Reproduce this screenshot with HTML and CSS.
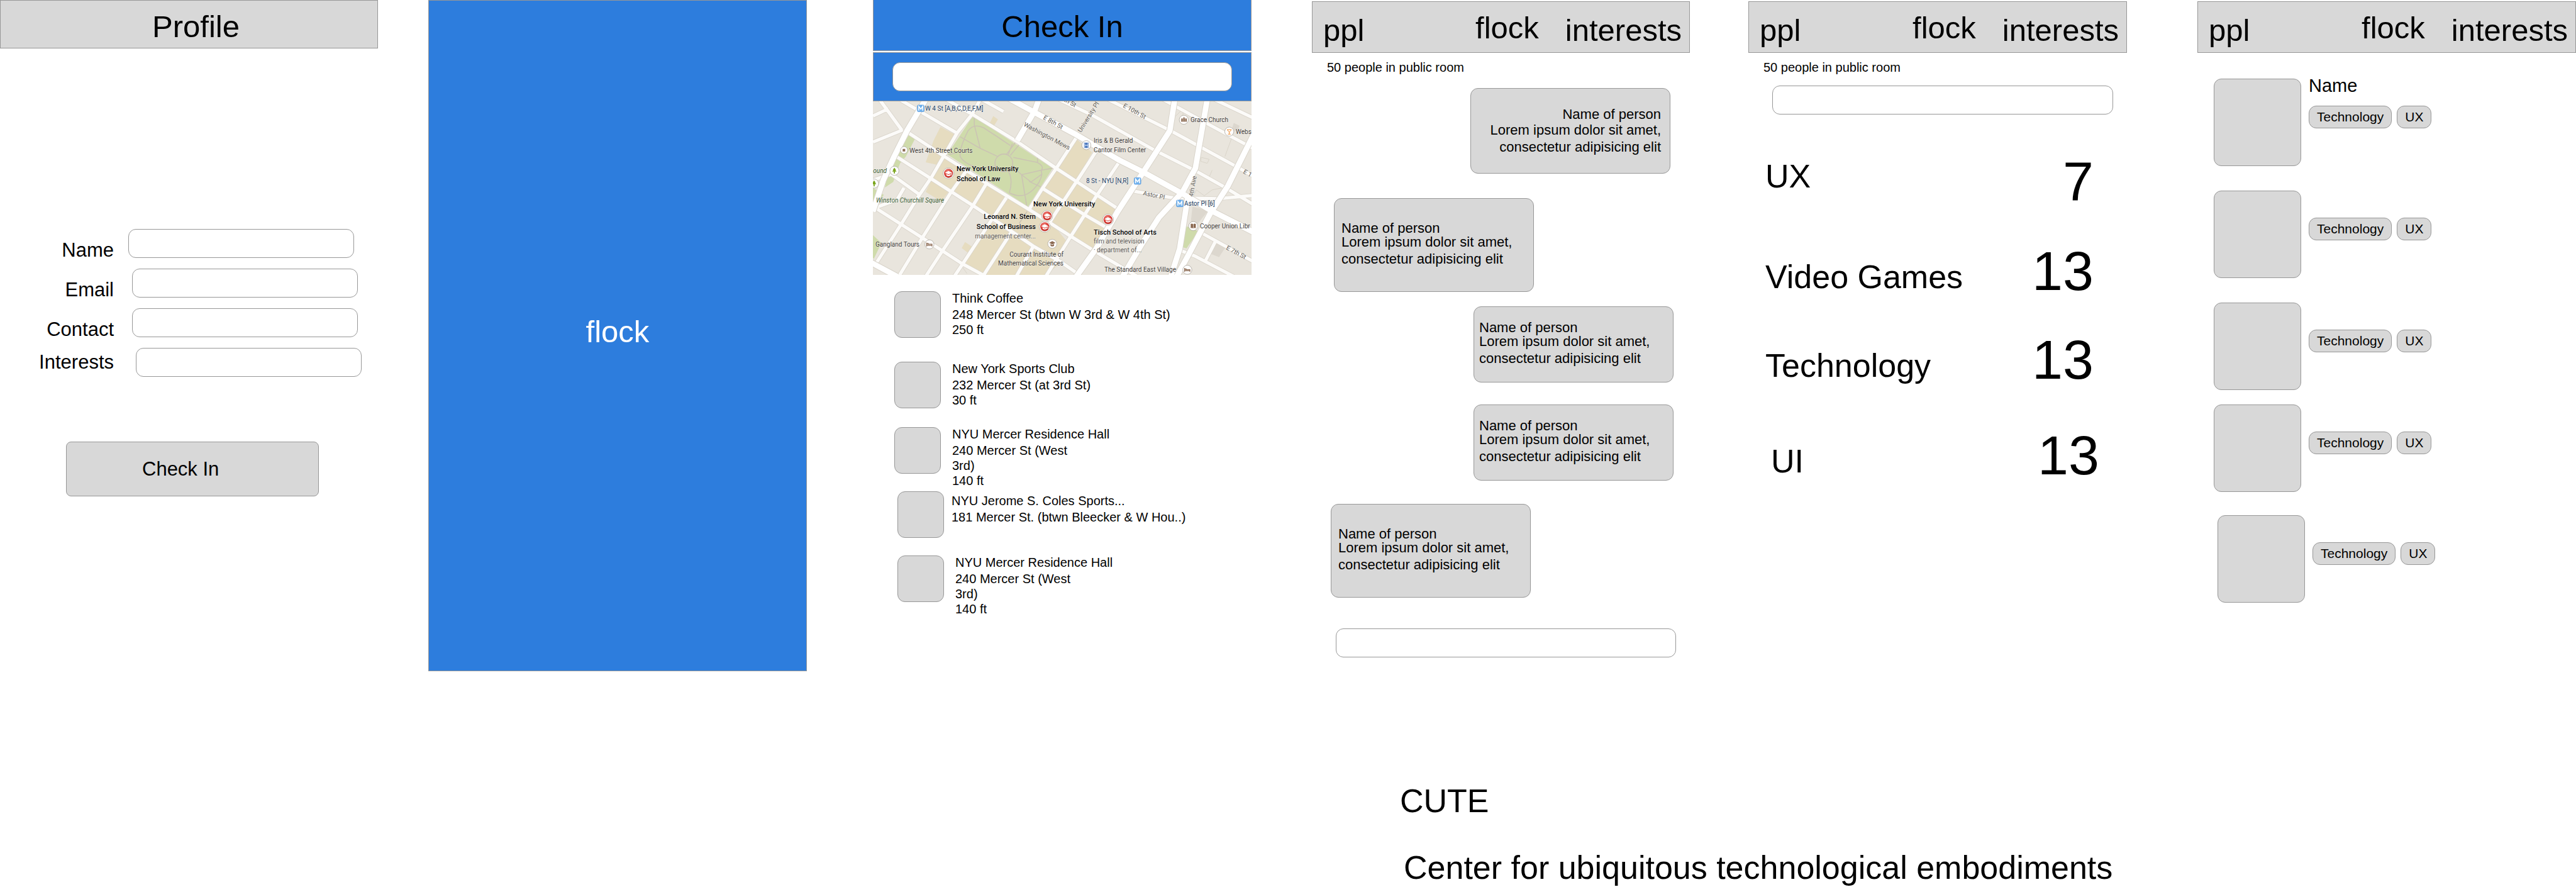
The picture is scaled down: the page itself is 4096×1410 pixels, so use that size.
FILE: index.html
```html
<!DOCTYPE html>
<html lang="en">
<head>
<meta charset="utf-8">
<meta name="viewport" content="width=device-width, initial-scale=1">
<title>flock wireframes</title>
<link rel="stylesheet" href="styles.css">
</head>
<body>
<main class="board">

  <section class="screen profile">
    <header class="bar"><h1 class="title">Profile</h1></header>
    <form class="profile-form">
      <div class="field"><label class="low" for="name">Name</label><input class="box" id="name" type="text"></div>
      <div class="field step-1"><label class="low" for="email">Email</label><input class="box" id="email" type="text"></div>
      <div class="field step-1"><label class="low" for="contact">Contact</label><input class="box" id="contact" type="text"></div>
      <div class="field step-2"><label for="interests">Interests</label><input class="box" id="interests" type="text"></div>
      <button class="submit" type="button">Check In</button>
    </form>
  </section>

  <section class="screen splash"><p class="title">flock</p></section>

  <section class="screen checkin">
    <header class="bar blue"><h2 class="title">Check In</h2></header>
    <div class="search"><input class="box" type="text" aria-label="Search places"></div>
    <svg class="map" viewBox="0 0 602 276" role="img" aria-label="Map around New York University">
      <defs>
        <radialGradient id="redfill" cx=".4" cy=".3" r=".8"><stop offset="0" stop-color="#f08078"/><stop offset=".6" stop-color="#d63c34"/><stop offset="1" stop-color="#b02a24"/></radialGradient>
        <g id="pin"><circle r="23" fill="#fff" stroke="#aaa59c" stroke-width="2.5"/></g>
        <g id="nyu"><circle r="28" fill="#fff" stroke="#bbb5ac" stroke-width="3"/><circle r="23" fill="url(#redfill)"/><path d="M-18-3 0-12 18-3 0 5Z M-11 3V10Q0 18 11 10V3L0 9Z" fill="#fff"/><path d="M16-3V11" stroke="#fff" stroke-width="3"/></g>
        <g id="tree"><use href="#pin"/><path d="M0-16 8-5H5L11 4H3V14H-3V4H-11L-5-5H-8Z" fill="#7aa51c"/></g>
        <g id="bed"><use href="#pin"/><path d="M-14-9V10M-14 5H13M13 10V-1H-8" fill="none" stroke="#8c6a52" stroke-width="4"/><circle cx="-8" cy="-3" r="4" fill="#8c6a52"/></g>
        <g id="metro"><rect x="-17" y="-17" width="34" height="34" rx="5" fill="#6fb1ee" stroke="#4a90d9" stroke-width="2"/><path d="M-10 11V-10L0 4 10-10V11" fill="none" stroke="#fff" stroke-width="5"/></g>
      </defs>
      <svg width="602" height="276" viewBox="57 30 1923 882" preserveAspectRatio="none">
        <rect x="57" y="30" width="1923" height="882" fill="#e9e5dd"/>
        <g fill="#e6dcc0">
          <path d="M400 160 475 200 410 305 380 352 325 340 365 230Z"/>
          <path d="M668 105 692 122 672 155 650 142Z"/>
          <path d="M415 315 850 580 1000 690 1040 740 990 840 760 700 565 560 355 425Z"/>
          <path d="M355 430 440 490 405 540 325 490Z"/>
          <path d="M525 745 560 768 540 800 508 775Z"/>
          <path d="M655 640 960 820 1010 850 940 912H600L510 860Z"/>
          <path d="M1095 225 1170 290 1090 430 1300 575 1180 790 1060 715 850 580 990 365Z"/>
        </g>
        <g fill="#dcd7ce"><path d="M1680 565 1760 585 1700 660 1672 640Z M1790 745 1845 775 1815 822 1772 805Z M1890 140 1920 155 1905 185 1880 170Z"/></g>
        <g fill="#cfdbab">
          <path d="M565 105 970 370 845 565 435 300Z"/>
          <path d="M240 200 270 222 225 310 195 345 160 440 118 468 130 400 175 310Z"/>
          <path d="M57 470 112 505 75 565 57 560Z"/>
          <path d="M1650 665 1710 690 1650 777 1625 770Z"/>
          <path d="M57 710 100 750 62 830 57 825Z"/>
        </g>
        <g fill="none" stroke="#cbc3b4" stroke-width="5">
          <circle cx="722" cy="343" r="45"/>
          <path d="M572 105V150L602 270M500 210 600 268 690 310M500 310Q495 270 540 180 570 140 620 165 690 210 755 255M500 310Q520 350 600 370L680 360M735 300 780 240M755 305 800 250M745 300 765 245M770 315Q840 330 890 340 930 360 912 380L812 403 765 360M970 370 912 380 915 400 860 440 812 403 838 560M893 315V340M745 385Q770 430 750 495M750 495Q820 530 870 480 910 440 915 400M850 437 910 465M440 302 480 292M840 590 800 650"/>
          <path stroke="#d9d3c8" stroke-width="3" d="M1595 105 1635 65 1630 110M1725 315 1765 325 1755 345 1722 335ZM1680 520 1700 480 1740 510 1780 480 1830 470M1765 415 1780 380M1845 310 1900 160M510 870 535 905"/>
        </g>
        <g id="roads" fill="none" stroke-linejoin="round">
          <path stroke="#d8d3c9" stroke-width="22" d="M200 25 485 192M420 15 560 95 790 235 990 372 1090 437 1300 575M230 185 420 310 640 450 850 580 960 650 1060 715 1180 790 1400 920M175 310 355 425 565 560 760 690 870 765 1010 845 1110 915M57 430 150 400 295 505M75 575 200 655 310 725 410 790 510 855 630 920M1000 20 1170 100 1490 280 1690 380 1850 470 1990 555M1250 20 1570 180 1900 360 1990 410M1530 20 1730 130 1990 270M1790 20 1990 115M1385 487 1580 520 1810 525 1990 508M57 105 135 68M57 237 210 175M90 20 130 75 205 178M600 15 720 82M915 470 1130 605 1245 672M1600 780 1690 815 1890 920M1710 690 1990 845M1795 745 1745 842M600 25 560 97 485 190 355 415 290 510 200 655 75 850M1090 215 990 368 920 470 850 580M530 385 455 490 310 720 188 920M635 445 565 560 410 790 325 920M735 520 655 640 510 860 470 920M760 695 615 920M870 770 785 920M1190 285 1090 440 990 590 955 645M1310 335 1190 515 1130 610 1050 735 935 920M215 470 180 530 70 570"/>
          <path stroke="#fcfbf9" stroke-width="17" d="M200 25 485 192M420 15 560 95 790 235 990 372 1090 437 1300 575M230 185 420 310 640 450 850 580 960 650 1060 715 1180 790 1400 920M175 310 355 425 565 560 760 690 870 765 1010 845 1110 915M57 430 150 400 295 505M75 575 200 655 310 725 410 790 510 855 630 920M1000 20 1170 100 1490 280 1690 380 1850 470 1990 555M1250 20 1570 180 1900 360 1990 410M1530 20 1730 130 1990 270M1790 20 1990 115M1385 487 1580 520 1810 525 1990 508M57 105 135 68M57 237 210 175M90 20 130 75 205 178M600 15 720 82M915 470 1130 605 1245 672M1600 780 1690 815 1890 920M1710 690 1990 845M1795 745 1745 842M600 25 560 97 485 190 355 415 290 510 200 655 75 850M1090 215 990 368 920 470 850 580M530 385 455 490 310 720 188 920M635 445 565 560 410 790 325 920M735 520 655 640 510 860 470 920M760 695 615 920M870 770 785 920M1190 285 1090 440 990 590 955 645M1310 335 1190 515 1130 610 1050 735 935 920M215 470 180 530 70 570"/>
          <path stroke="#d8d3c9" stroke-width="34" d="M325 20 230 180 165 310 110 430 57 590M900 20 878 80 790 230M720 0 870 82 1090 200 1310 330 1430 390 1630 500 1780 588 1990 695M1590 20 1565 180 1430 390 1300 590 1190 780 1090 920M1755 20 1695 370 1630 490 1510 620 1420 760 1325 920M1655 525 1615 780 1570 920M1990 200 1860 460 1770 600 1660 810 1600 920M40 845 180 920"/>
          <path stroke="#fff" stroke-width="28" d="M325 20 230 180 165 310 110 430 57 590M870 82 1090 200 1310 330 1430 390 1630 500M1590 20 1565 180 1430 390 1300 590 1190 780 1090 920M1755 20 1695 370 1630 490 1510 620 1420 760 1325 920M1655 525 1615 780 1570 920M1990 200 1860 460 1770 600 1660 810 1600 920M40 845 180 920M900 20 878 80 790 230M720 0 870 82M1630 500 1780 588 1990 695"/>
        </g>
        <use href="#metro" x="300" y="66"/><use href="#metro" x="1401" y="435"/><use href="#metro" x="1616" y="549"/>
        <use href="#tree" x="166" y="383"/><use href="#tree" x="63" y="448"/>
        <use href="#bed" x="344" y="757"/><use href="#bed" x="1654" y="886"/>
        <circle cx="215" cy="278" r="18" fill="#fff" stroke="#aaa59c" stroke-width="2.5"/><path d="M208 272h13v13h-13z" fill="#8c6a52"/>
        <use href="#pin" x="1636" y="124"/><path d="M1623 134v-14l4-5 4 5v14zM1633 134v-18l4-7 4 7v18zM1643 134v-14l4-5 4 5v14z" fill="#8c6a52"/>
        <use href="#pin" x="1867" y="184"/><path d="M1856 174h22l-11 13zM1867 186v10M1860 197h14" fill="none" stroke="#ee8a2c" stroke-width="3"/>
        <use href="#pin" x="1141" y="253"/><path d="M1131 240v27M1151 240v27" fill="none" stroke="#4b79c0" stroke-width="4" stroke-dasharray="4 2"/><path d="M1134 240h14v12h-14zM1134 255h14v12h-14z" fill="#4b79c0"/>
        <use href="#pin" x="1684" y="664"/><path d="M1671 653q7-4 12 1v22q-5-5-12-1zM1697 653q-7-4-12 1v22q5-5 12-1z" fill="#8c6a52"/>
        <use href="#pin" x="968" y="754"/><path d="M952 749l16-9 16 9-16 8zM959 755v9q9 7 18 0v-9l-9 5z" fill="#8c6a52"/>
        <use href="#nyu" x="441" y="396"/><use href="#nyu" x="942" y="612"/><use href="#nyu" x="930" y="667"/><use href="#nyu" x="1251" y="631"/>
      </svg>
      <g class="street">
        <text transform="translate(270 28) rotate(29)">E 8th St</text>
        <text transform="translate(239 39) rotate(28)">Washington Mews</text>
        <text transform="translate(331 50) rotate(-58)">University Pl</text>
        <text transform="translate(291 -7) rotate(29)">E 9th St</text>
        <text transform="translate(397 9) rotate(29)">E 10th St</text>
        <text transform="translate(429 149) rotate(12)">Astor Pl</text>
        <text transform="translate(509 152) rotate(-80)">4th Ave</text>
        <text transform="translate(588 114) rotate(29)">E 1</text>
        <text transform="translate(561 235) rotate(28)">E 7th St</text>
      </g>
      <g class="metro-name">
        <text x="83" y="15">W 4 St [A,B,C,D,E,F,M]</text>
        <text x="339" y="130">8 St - NYU [N,R]</text>
        <text x="495" y="166">Astor Pl [6]</text>
      </g>
      <g class="place">
        <text x="58" y="82">West 4th Street Courts</text>
        <text x="505" y="33">Grace Church</text>
        <text x="577" y="52">Webs</text>
        <text x="351" y="66">Iris &amp; B Gerald</text>
        <text x="351" y="81">Cantor Film Center</text>
        <text x="520" y="202">Cooper Union Libr</text>
        <text x="303" y="247" text-anchor="end">Courant Institute of</text>
        <text x="303" y="261" text-anchor="end">Mathematical Sciences</text>
        <text x="4" y="231">Gangland Tours</text>
        <text x="368" y="271">The Standard East Village</text>
      </g>
      <g class="note">
        <text x="259" y="218" text-anchor="end">management center...</text>
        <text x="351" y="226">film and television</text>
        <text x="351" y="240">· department of...</text>
      </g>
      <g class="green">
        <text x="22" y="114" text-anchor="end">ound</text>
        <text x="5" y="161">Winston Churchill Square</text>
      </g>
      <g class="school">
        <text x="133" y="111">New York University</text>
        <text x="133" y="127">School of Law</text>
        <text x="255" y="167">New York University</text>
        <text x="259" y="187" text-anchor="end">Leonard N. Stern</text>
        <text x="259" y="203" text-anchor="end">School of Business</text>
        <text x="351" y="212">Tisch School of Arts</text>
      </g>
    </svg>
    <ul class="places">
      <li><span class="thumb"></span><div class="lines"><h3>Think Coffee</h3><p>248 Mercer St (btwn W 3rd &amp; W 4th St)</p><p>250 ft</p></div></li>
      <li><span class="thumb"></span><div class="lines"><h3>New York Sports Club</h3><p>232 Mercer St (at 3rd St)</p><p>30 ft</p></div></li>
      <li><span class="thumb"></span><div class="lines"><h3>NYU Mercer Residence Hall</h3><p>240 Mercer St (West<br>3rd)</p><p>140 ft</p></div></li>
      <li class="shift snug"><span class="thumb"></span><div class="lines"><h3>NYU Jerome S. Coles Sports...</h3><p>181 Mercer St. (btwn Bleecker &amp; W Hou..)</p></div></li>
      <li class="shift"><span class="thumb"></span><div class="lines"><h3>NYU Mercer Residence Hall</h3><p>240 Mercer St (West<br>3rd)</p><p>140 ft</p></div></li>
    </ul>
  </section>

  <section class="screen chat">
    <nav class="bar tabs"><a href="#ppl">ppl</a><a class="home" href="#flock">flock</a><a href="#interests">interests</a></nav>
    <p class="status">50 people in public room</p>
    <div class="log">
      <article class="bubble mine inset reply"><h3>Name of person</h3><p>Lorem ipsum dolor sit amet,<br>consectetur adipisicing elit</p></article>
      <article class="bubble tall inset"><h3>Name of person</h3><p>Lorem ipsum dolor sit amet,<br>consectetur adipisicing elit</p></article>
      <article class="bubble mine"><h3>Name of person</h3><p>Lorem ipsum dolor sit amet,<br>consectetur adipisicing elit</p></article>
      <article class="bubble mine"><h3>Name of person</h3><p>Lorem ipsum dolor sit amet,<br>consectetur adipisicing elit</p></article>
      <article class="bubble tall"><h3>Name of person</h3><p>Lorem ipsum dolor sit amet,<br>consectetur adipisicing elit</p></article>
    </div>
    <div class="entry"><input class="box" type="text" aria-label="Message"></div>
  </section>

  <section class="screen topics">
    <nav class="bar tabs"><a href="#ppl">ppl</a><a class="home" href="#flock">flock</a><a href="#interests">interests</a></nav>
    <p class="status">50 people in public room</p>
    <div class="entry"><input class="box" type="text" aria-label="Search interests"></div>
    <ul class="counts">
      <li class="top"><span>UX</span><strong>7</strong></li>
      <li><span>Video Games</span><strong>13</strong></li>
      <li><span>Technology</span><strong>13</strong></li>
      <li class="indent"><span>UI</span><strong>13</strong></li>
    </ul>
  </section>

  <section class="screen people">
    <nav class="bar tabs"><a href="#ppl">ppl</a><a class="home" href="#flock">flock</a><a href="#interests">interests</a></nav>
    <ul class="persons">
      <li><span class="avatar"></span><div class="info"><h3>Name</h3><div class="tags"><span class="tag">Technology</span><span class="tag">UX</span></div></div></li>
      <li><span class="avatar"></span><div class="info"><div class="tags"><span class="tag">Technology</span><span class="tag">UX</span></div></div></li>
      <li><span class="avatar"></span><div class="info"><div class="tags"><span class="tag">Technology</span><span class="tag">UX</span></div></div></li>
      <li><span class="avatar"></span><div class="info"><div class="tags"><span class="tag">Technology</span><span class="tag">UX</span></div></div></li>
      <li class="shift"><span class="avatar"></span><div class="info"><div class="tags"><span class="tag">Technology</span><span class="tag">UX</span></div></div></li>
    </ul>
  </section>

  <footer class="caption">
    <p>CUTE</p>
    <p class="full">Center for ubiquitous technological embodiments</p>
  </footer>
</main>
</body>
</html>
```
FILE: styles.css
```css
* { box-sizing: border-box; }

body, h1, h2, h3, p, ul { margin: 0; padding: 0; }

ul { list-style: none; }

body {
  background: #fff;
  color: #000;
  font-family: "Liberation Sans", Arial, sans-serif;
  font-size: 20px;
  overflow-x: hidden;
}

h1, h2, h3, strong { font-weight: 400; }

/* Six screens side by side, with the empty tracks between them */
.board {
  display: grid;
  grid-template-columns:
    [profile] 601fr 80fr
    [splash] 602fr 105fr
    [checkin] 602fr 96fr
    [chat] 601fr 93fr
    [topics] 602fr 112fr
    [people] 602fr;
  align-items: start;
}

.screen { min-width: 0; }
.profile { grid-column: profile; }
.splash { grid-column: splash; }
.checkin { grid-column: checkin; }
.chat { grid-column: chat; }
.topics { grid-column: topics; }
.people { grid-column: people; }

/* Shared parts */
.bar {
  display: flex;
  align-items: center;
  justify-content: center;
  height: 82px;
  border: 1px solid #979797;
  background: #d8d8d8;
}

.title {
  font-size: 49px;
  line-height: 56px;
}

.box {
  display: block;
  width: 100%;
  height: 46px;
  padding: 0 12px;
  border: 1px solid #979797;
  border-radius: 12px;
  background: #fff;
  font: inherit;
}

.blue, .search, .splash {
  border: 1px solid #979797;
  background: #2d7ddd;
}

.tabs {
  gap: 42px;
  margin-top: 2px;
  padding: 10px 12px 0 17px;
  font-size: 49px;
  line-height: 56px;
}

.tabs a { color: inherit; text-decoration: none; }
.tabs a:first-child { margin-right: auto; }
.tabs .home { padding-bottom: 8px; }

.status {
  margin: 11px 0 0 24px;
  line-height: 24px;
}

.entry { padding: 0 22px 0 38px; }

/* Profile */
.profile .bar {
  height: 77px;
  padding: 6px 0 0 22px;
}

.profile-form {
  display: flex;
  flex-direction: column;
  gap: 17px;
  padding-top: 287px;
  font-size: 31px;
  line-height: 32px;
}

.field {
  display: grid;
  grid-template: 46px / 181px 1fr;
  column-gap: 23px;
  align-items: center;
  padding-right: 38px;
}

.field label { text-align: right; }
.field .low { padding-top: 22px; }
.step-1 { column-gap: 29px; padding-right: 32px; }
.step-2 { column-gap: 35px; padding-right: 26px; }

.submit {
  height: 87px;
  margin: 86px 94px 0 105px;
  padding: 0 0 0 120px;
  border: 1px solid #979797;
  border-radius: 8px;
  background: #d8d8d8;
  color: inherit;
  font: inherit;
  text-align: left;
}

/* Splash */
.splash {
  display: flex;
  align-items: center;
  justify-content: center;
  min-height: 1067px;
  padding-bottom: 14px;
  color: #fff;
}

/* Check in */
.checkin .bar {
  height: 81px;
  padding-top: 3px;
  border-top: 0;
}

.search {
  margin-top: 2px;
  padding: 15px 30px;
}

.map {
  display: block;
  width: 100%;
  height: auto;
  font-family: Roboto, sans-serif;
  font-size: 10px;
}

.map text {
  paint-order: stroke;
  stroke: #fff;
  stroke-opacity: .6;
  stroke-width: 1px;
  stroke-linejoin: round;
}

.street { fill: #5e5a53; font-size: 10px; }
.metro-name { fill: #1d3f66; }
.place { fill: #3f3b37; }
.note { fill: #5d5953; }
.green { fill: #38592c; font-style: italic; }
.school { fill: #000; font-size: 11px; font-weight: 500; }

.places {
  display: grid;
  grid-template-rows: 112px 104px 102px 102px auto;
  padding: 23px 0 0 34px;
}

.places li {
  display: flex;
  align-items: flex-start;
  gap: 18px;
  line-height: 24px;
}

.places .shift { margin-left: 5px; }
.places .snug { gap: 12px; }
.places h3 { font-size: 20px; line-height: 28px; }
.snug .lines { padding-top: 4px; }

.thumb {
  width: 74px;
  height: 74px;
  margin-top: 3px;
  border: 1px solid #979797;
  border-radius: 12px;
  background: #d8d8d8;
}

/* Chat */
.log {
  display: grid;
  grid-template-rows: 175px 172px 156px 158px 198px;
  align-items: start;
  padding: 21px 26px 0 30px;
}

.bubble {
  width: 318px;
  padding: 24px 8px;
  border: 1px solid #979797;
  border-radius: 12px;
  background: #d8d8d8;
  font-size: 22px;
  line-height: 27px;
}

.bubble h3 { font-size: 22px; line-height: 17px; }
.bubble.tall { padding: 38px 11px; }
.bubble.mine { justify-self: end; }
.bubble.inset { margin-inline: 5px; }
.bubble.reply { padding: 29px 14px 28px; text-align: right; }
.bubble.reply h3 { line-height: 23px; }

/* Interests */
.topics .entry { padding-top: 17px; }

.counts {
  display: grid;
  grid-template-rows: 142px 141px 152px auto;
  align-items: start;
  padding: 69px 53px 0 27px;
  font-size: 52px;
  line-height: 58px;
}

.counts li {
  display: flex;
  align-items: flex-end;
  justify-content: space-between;
}

.counts .top { align-items: flex-start; }
.counts .indent { margin: 0 -9px 0 9px; }
.counts strong { font-size: 88px; line-height: 76px; }

/* People */
.persons {
  display: grid;
  grid-template-rows: 178px 178px 162px 176px auto;
  padding: 41px 0 0 26px;
}

.persons li {
  display: flex;
  align-items: flex-start;
  gap: 12px;
}

.persons .shift { margin-left: 6px; }

.avatar {
  width: 139px;
  height: 139px;
  border: 1px solid #979797;
  border-radius: 12px;
  background: #d8d8d8;
}

.info {
  display: grid;
  grid-template-rows: 43px auto;
}

.info h3 { font-size: 29px; line-height: 22px; }
.tags { display: flex; gap: 8px; grid-row: 2; }

.tag {
  padding: 0 12px;
  border: 1px solid #979797;
  border-radius: 12px;
  background: #d8d8d8;
  font-size: 21px;
  line-height: 34px;
}

/* Caption under the screens */
.caption {
  grid-column: chat / -1;
  padding: 175px 0 0 140px;
  font-size: 52px;
  line-height: 62px;
}

.caption .full { margin-top: 44px; padding-left: 6px; }
```
